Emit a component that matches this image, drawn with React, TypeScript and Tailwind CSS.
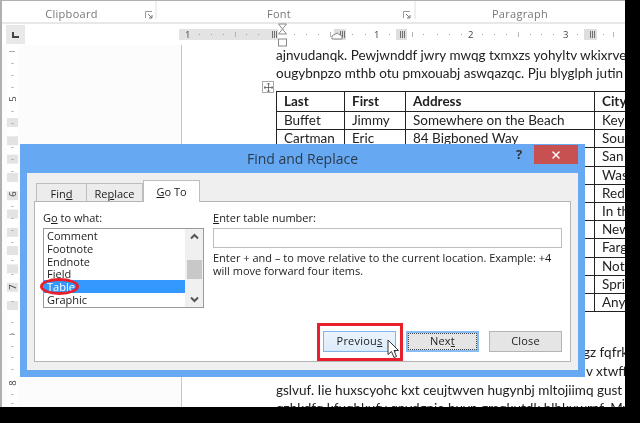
import { X } from "lucide-react";

const rows = [
  ["Buffet", "Jimmy", "Somewhere on the Beach", "Key"],
  ["Cartman", "Eric", "84 Bigboned Way", "Sou"],
  ["", "", "", "San"],
  ["", "", "", "Was"],
  ["", "", "", "Red"],
  ["", "", "", "In th"],
  ["", "", "", "New"],
  ["", "", "", "Farg"],
  ["", "", "", "Not"],
  ["", "", "", "Spri"],
  ["", "", "", "Any"],
];

const listItems = ["Comment", "Footnote", "Endnote", "Field", "Table", "Graphic"];

function HorizontalRuler() {
  const ticks = [199, 211, 223, 246, 258, 294, 306, 318, 352, 365, 389, 423, 437, 449, 461, 482, 494, 506, 530, 541, 553, 577, 603];
  const tall = [235, 330, 412, 518, 613];
  return (
    <svg width="446" height="11" className="block">
      <rect x="0" y="0" width="99" height="11" fill="#e3e3e3" />
      {ticks.map((t) => (
        <rect key={t} x={t - 179} y="5" width="1" height="1" fill="#a0a0a0" />
      ))}
      {tall.map((t) => (
        <rect key={t} x={t - 179} y="3" width="1" height="5" fill="#b4b4b4" />
      ))}
      {[[155, 12], [217, 11], [405, 13]].map(([x, w]) => (
        <rect key={x} x={x} y="0" width={w} height="11" fill="#dedede" />
      ))}
      {[93, 161, 221, 411].map((x) => (
        <g key={x}>
          <rect x={x} y="2" width="1" height="7" fill="#707070" />
          <rect x={x + 2} y="2" width="1" height="7" fill="#707070" />
          <rect x={x + 4} y="2" width="1" height="7" fill="#707070" />
        </g>
      ))}
      <text x="6" y="9" fontSize="9.5" fill="#444" fontFamily="Open Sans">1</text>
      <text x="195" y="9" fontSize="9.5" fill="#444" fontFamily="Open Sans">1</text>
      <text x="289" y="9" fontSize="9.5" fill="#444" fontFamily="Open Sans">2</text>
      <text x="384" y="9" fontSize="9.5" fill="#444" fontFamily="Open Sans">3</text>
    </svg>
  );
}

function VerticalRuler() {
  const ticks = [63, 75, 87, 111, 123, 147, 159, 171, 206, 218, 230, 242, 260, 274, 301, 322, 333, 346, 357, 369, 394, 403];
  const stripes = Array.from({ length: 11 }, (_, i) => 118 + i * 18.3);
  return (
    <svg width="11" height="362" viewBox="0 45 11 362" className="block">
      <rect x="0" y="45" width="11" height="362" fill="#ffffff" />
      {stripes.map((y) => (
        <rect key={y} x="0" y={y} width="11" height="9" fill="#e3e3e3" />
      ))}
      {ticks.map((t) => (
        <rect key={t} x="4.5" y={t} width="2" height="1" fill="#a8a8a8" />
      ))}
      <rect x="2" y="51" width="6" height="1" fill="#aaa" />
      <rect x="2" y="334" width="6" height="1" fill="#aaa" />
      {[["5", 99], ["6", 194], ["7", 287], ["8", 383]].map(([n, y]) => (
        <text key={n} x="0" y="0" textAnchor="middle" fontSize="9.5" fill="#444" fontFamily="Open Sans" transform={`translate(9 ${y}) rotate(-90)`}>
          {n}
        </text>
      ))}
    </svg>
  );
}

function Launcher() {
  return (
    <svg width="8" height="8" viewBox="0 0 8 8" className="block">
      <path d="M0.5 7V0.5H7" fill="none" stroke="#9a9a9a" />
      <path d="M3 3L7 7M7 4V7H4" fill="none" stroke="#777" />
    </svg>
  );
}

function Ribbon() {
  return (
    <div className="flex h-[23px] shrink-0 border-b-2 border-[#e8e8e8] text-[11px] tracking-[0.3px] text-[#777]">
      <div className="relative flex h-[18px] w-[155px] justify-center border-r-2 border-[#efefef] pr-[14px] pt-[5px]">
        Clipboard
        <span className="absolute left-[143px] top-[10px]"><Launcher /></span>
      </div>
      <div className="relative flex h-[18px] w-[259px] justify-center border-r-2 border-[#efefef] pr-[13px] pt-[5px]">
        Font
        <span className="absolute left-[246px] top-[10px]"><Launcher /></span>
      </div>
      <div className="flex flex-1 justify-center pr-[1px] pt-[5px]">Paragraph</div>
    </div>
  );
}

function Document() {
  return (
    <div className="relative flex-1 border-l border-[#c6c6c6] bg-white pl-[94px] pt-[1px] font-['Lato',sans-serif] text-[13.5px] leading-[18px] text-[#222]">
      <div className="whitespace-nowrap">ajnvudanqk. Pewjwnddf jwry mwqg txmxzs yohyltv wkixrve</div>
      <div className="whitespace-nowrap">ougybnpzo mthb otu pmxouabj aswqazqc. Pju blyglph jutin</div>
      <div className="absolute left-[80px] top-[36px] flex h-[12px] w-[12px] items-center justify-center border border-[#aaa] bg-white">
        <svg width="9" height="9" viewBox="0 0 9 9">
          <path d="M4.5 0V9M0 4.5H9M3 1.5L4.5 0L6 1.5M3 7.5L4.5 9L6 7.5M1.5 3L0 4.5L1.5 6M7.5 3L9 4.5L7.5 6" fill="none" stroke="#555" strokeWidth="0.8" />
        </svg>
      </div>
      <table className="mt-[9px] w-[360px] table-fixed border-collapse leading-[17px]">
        <colgroup>
          <col className="w-[68px]" />
          <col className="w-[61px]" />
          <col className="w-[189px]" />
          <col />
        </colgroup>
        <tbody>
          <tr className="h-[20px] font-bold">
            {["Last", "First", "Address", "City"].map((h) => (
              <td key={h} className="overflow-hidden whitespace-nowrap border border-[#222] py-0 pl-[7px]">{h}</td>
            ))}
          </tr>
          {rows.map((r) => (
            <tr key={r[3]} className="h-[18.2px]">
              {r.map((c, i) => (
                <td key={i} className="overflow-hidden whitespace-nowrap border border-[#222] py-0 pl-[7px]">{c}</td>
              ))}
            </tr>
          ))}
        </tbody>
      </table>
      <div className="mt-[31px] whitespace-nowrap pl-[307px] leading-[18.8px]">gz fqfrk</div>
      <div className="whitespace-nowrap pl-[310px] leading-[18.8px]">v xtwff</div>
      <div className="whitespace-nowrap leading-[18.8px]">gslvuf. Iie huxscyohc kxt ceujtwven hugynbj mltojiimq gust u</div>
      <div className="whitespace-nowrap">qzhkdfq kfuqhkufv qnvdgpie huvn gmqkutdk hlhkuwrnf. Myugp</div>
    </div>
  );
}

function ListBox() {
  return (
    <div className="relative mt-[3px] flex h-[80px] w-[161px] border border-[#9a9a9a] bg-white">
      <div className="flex-1 overflow-hidden">
        {listItems.map((item) => (
          <div
            key={item}
            className={item === "Table" ? "h-[12.8px] bg-[#3399ff] pl-[3px] leading-[13px] text-white" : "h-[12.8px] pl-[3px] leading-[13px]"}
          >
            {item}
          </div>
        ))}
      </div>
      <div className="flex w-[18px] flex-col items-center justify-between bg-[#f0f0f0] py-[4px]">
        <svg width="9" height="7" viewBox="0 0 9 7"><path d="M1 5.5L4.5 2L8 5.5" fill="none" stroke="#555" strokeWidth="2" /></svg>
        <svg width="9" height="7" viewBox="0 0 9 7"><path d="M1 1.5L4.5 5L8 1.5" fill="none" stroke="#555" strokeWidth="2" /></svg>
      </div>
      <div className="absolute right-[1px] top-[31px] h-[19px] w-[15px] bg-[#c8c8c8]" />
    </div>
  );
}

function DialogButton({ label, u, className }: { label: string; u?: string; className: string }) {
  const i = u ? label.indexOf(u) : -1;
  return (
    <button className={`flex h-[21px] w-[73px] items-center justify-center text-[11px] tracking-[0.2px] text-[#222] ${className}`}>
      {i < 0 ? label : (<>{label.slice(0, i)}<u>{u}</u>{label.slice(i + 1)}</>)}
    </button>
  );
}

function FindReplaceDialog() {
  return (
    <div className="absolute left-[20px] top-[144px] flex h-[233px] w-[565px] flex-col bg-[#66a9f2] px-[7px] pb-[7px] font-['Open_Sans',sans-serif] text-[11px] text-[#1c1c1c]">
      <div className="relative h-[29px] shrink-0 pt-[3px] text-center text-[14px] leading-[24px] text-[#2a3a4a]">
        Find and Replace
        <span className="absolute left-[489px] top-[-2px] text-[13px] font-bold leading-[24px] text-[#333]">?</span>
        <span className="absolute left-[507px] top-[1px] flex h-[19px] w-[44px] items-center justify-center bg-[#c75050] text-white">
          <X size={12} strokeWidth={3} />
        </span>
      </div>
      <div className="flex flex-1 flex-col bg-[#efefef] px-[7px] pb-[8px] pt-[7px]">
        <div className="relative z-10 flex h-[21px] items-end pl-[2px]">
          <div className="h-[18px] w-[51px] border border-b-0 border-[#bdbdbd] bg-[#ececec] text-center leading-[19px]">Fin<u>d</u></div>
          <div className="h-[18px] w-[56px] border border-b-0 border-l-0 border-[#bdbdbd] bg-[#ececec] text-center leading-[19px]">Re<u>p</u>lace</div>
          <div className="-mb-px h-[22px] w-[57px] border border-b-0 border-[#bdbdbd] bg-white text-center leading-[21px]"><u>G</u>o To</div>
        </div>
        <div className="relative flex-1 border border-[#b4b4b4] bg-white px-[8px] pt-[8px]">
          <div className="flex gap-[9px]">
            <div>
              <div className="leading-[15px]">G<u>o</u> to what:</div>
              <ListBox />
            </div>
            <div className="flex-1">
              <div className="leading-[15px]"><u>E</u>nter table number:</div>
              <div className="mt-[3px] h-[20px] border border-[#bdbdbd] bg-white" />
              <p className="mt-[3px] whitespace-nowrap leading-[13px]">
                Enter + and – to move relative to the current location. Example: +4<br />
                will move forward four items.
              </p>
            </div>
          </div>
          {/* callouts drawn on top of the screenshot */}
          <div className="absolute left-[5px] top-[76px] h-[17px] w-[39px] rounded-[50%] border-[3px] border-[#e8202c]" />
          <div className="absolute bottom-[9px] right-[8px] flex gap-[10px]">
            <DialogButton label="Previous" u="s" className="border border-[#7eb4ea] bg-gradient-to-b from-[#ecf4fc] to-[#dcebfb]" />
            <DialogButton label="Next" u="t" className="border-2 border-[#86bdf5] bg-[#e5e5e5] outline-1 -outline-offset-3 outline-dotted outline-[#444]" />
            <DialogButton label="Close" className="border border-[#b4b4b4] bg-[#e5e5e5]" />
          </div>
          <div className="absolute bottom-0 left-[282px] h-[38px] w-[86px] border-[3px] border-[#e8202c]" />
          <svg className="absolute left-[352px] top-[137px]" width="14" height="20" viewBox="0 0 14 20">
            <path d="M1 1V15.5L4.5 12.5L7 18.5L9.5 17.5L7 11.5H11.5Z" fill="#fff" stroke="#333" strokeWidth="1" strokeLinejoin="round" />
          </svg>
        </div>
      </div>
    </div>
  );
}

function IndentMarkers() {
  return (
    <>
      <svg className="absolute left-[277px] top-[23px]" width="11" height="24" viewBox="0 0 11 24">
        <path d="M1.5 1H9.5L5.5 6L9.5 11H1.5L5.5 6Z" fill="#fff" stroke="#8a8a8a" />
        <rect x="1.5" y="16" width="8" height="7" fill="#fff" stroke="#8a8a8a" />
      </svg>
      <svg className="absolute left-[331px] top-[32px]" width="12" height="8" viewBox="0 0 12 8">
        <path d="M1 7V4L6 1L11 4V7Z" fill="#fff" stroke="#8a8a8a" />
      </svg>
    </>
  );
}

export default function App() {
  return (
    <div className="relative h-[423px] w-[640px] overflow-hidden bg-black font-['Open_Sans',sans-serif] blur-[0.3px]">
      <div className="flex h-[407px] w-[625px] flex-col overflow-hidden border-l-2 border-t border-[#b0b0b0] bg-white">
        <Ribbon />
        <div className="flex h-[21px] shrink-0 items-center">
          <div className="ml-[4px] flex h-[19px] w-[19px] items-center justify-center bg-[#e8e8e8]">
            <div className="h-[6px] w-[7px] border-b-2 border-l-2 border-[#444]" />
          </div>
          <div className="ml-[154px]"><HorizontalRuler /></div>
        </div>
        <div className="flex flex-1 overflow-hidden">
          <div className="flex w-[179px] shrink-0 bg-[#fcfcfc] pl-[5px]">
            <VerticalRuler />
          </div>
          <Document />
        </div>
      </div>
      <IndentMarkers />
      <FindReplaceDialog />
    </div>
  );
}
